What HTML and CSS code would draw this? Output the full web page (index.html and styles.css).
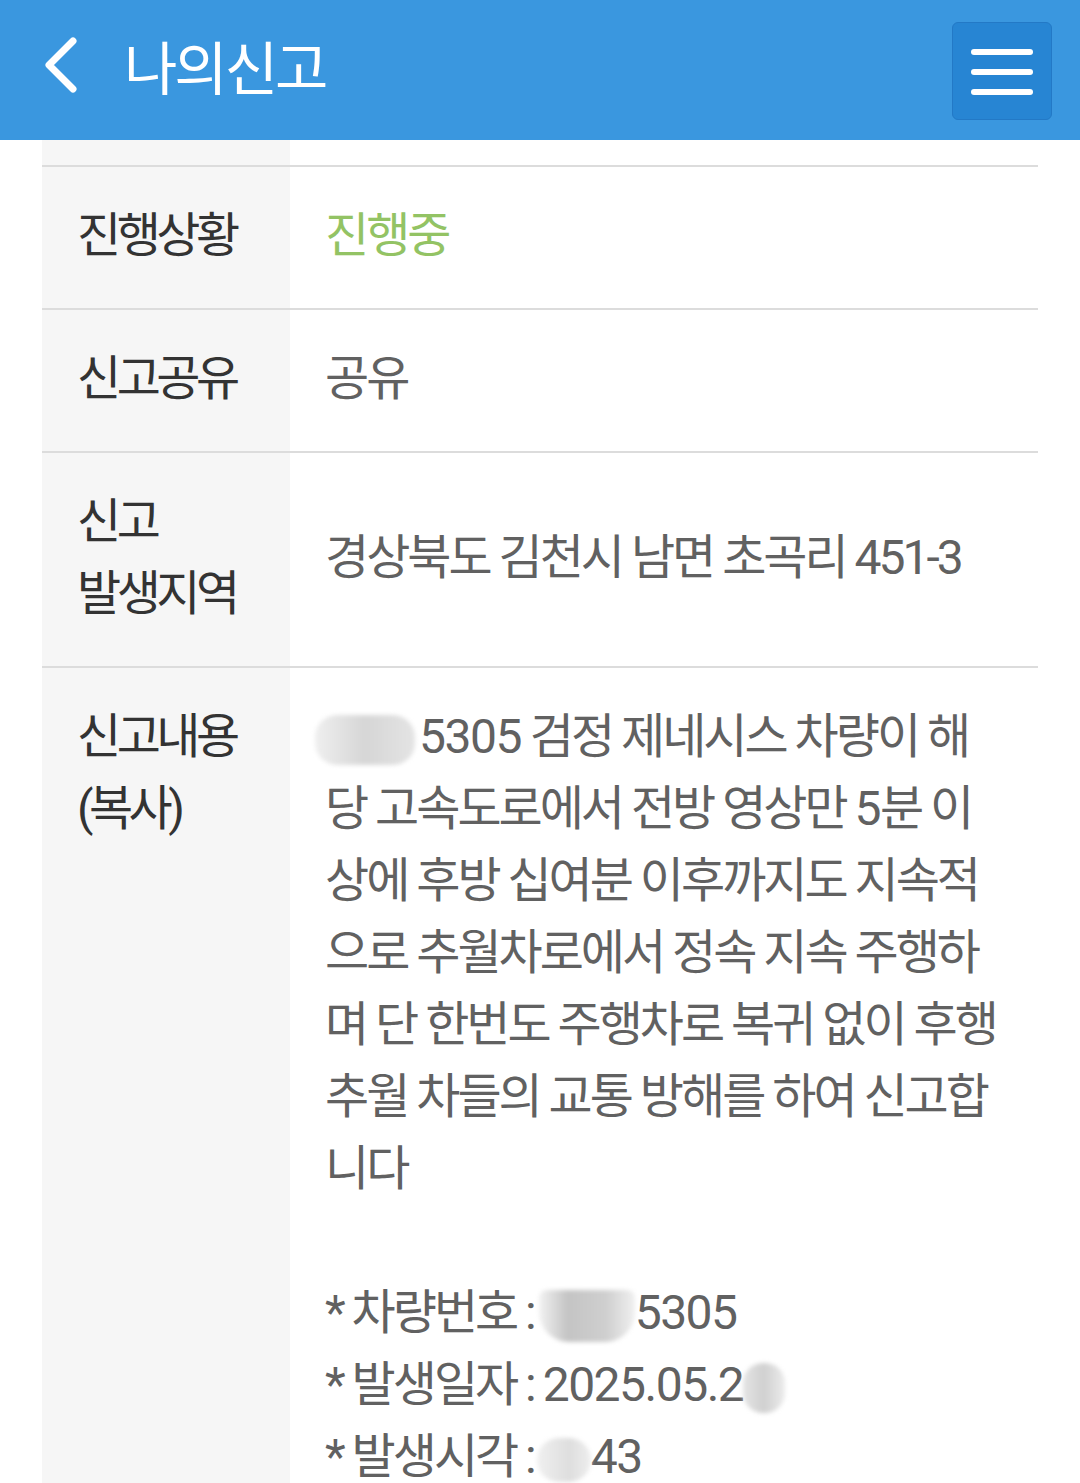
FILE: index.html
```html
<!DOCTYPE html>
<html lang="ko">
<head>
<meta charset="utf-8">
<title>나의신고</title>
<link rel="stylesheet" href="styles.css">
</head>
<body>
<header class="topbar">
  <div class="back">
    <svg width="40" height="60" viewBox="0 0 40 60"><path d="M33 6 L9 30 L33 54" fill="none" stroke="#fff" stroke-width="7" stroke-linecap="round" stroke-linejoin="round"/></svg>
  </div>
  <h1 class="title">나의신고</h1>
  <div class="menu-btn">
    <span class="bar"></span><span class="bar"></span><span class="bar"></span>
  </div>
</header>
<main class="table">
  <div class="row row-partial"><div class="label"></div><div class="value"></div></div>
  <div class="row">
    <div class="label">진행상황</div>
    <div class="value green">진행중</div>
  </div>
  <div class="row">
    <div class="label">신고공유</div>
    <div class="value">공유</div>
  </div>
  <div class="row">
    <div class="label">신고<br>발생지역</div>
    <div class="value center">경상북도 김천시 남면 초곡리 451-3</div>
  </div>
  <div class="row row-last">
    <div class="label">신고내용<br>(복사)</div>
    <div class="value"><span class="blur b1"></span><span class="num">5305</span> 검정 제네시스 차량이 해<br>당 고속도로에서 전방 영상만 <span class="num">5</span>분 이<br>상에 후방 십여분 이후까지도 지속적<br>으로 추월차로에서 정속 지속 주행하<br>며 단 한번도 주행차로 복귀 없이 후행<br>추월 차들의 교통 방해를 하여 신고합<br>니다<br><br>* 차량번호 : <span class="blur b2"></span><span class="num">5305</span><br>* 발생일자 : <span class="num">2025.05.2</span><span class="blur b3"></span><br>* 발생시각 : <span class="blur b4"></span><span class="num">43</span></div>
  </div>
</main>
</body>
</html>
```
FILE: styles.css
```css
html, body {
  margin: 0;
  padding: 0;
  background: #fff;
  font-family: "Roboto", "Noto Sans CJK KR", sans-serif;
}
.topbar {
  height: 140px;
  background: #3a97df;
  display: flex;
  align-items: center;
  padding: 0 28px 0 40px;
  box-sizing: border-box;
}
.back {
  width: 40px;
  height: 60px;
  margin-right: 44px;
  margin-top: -10px;
}
.back svg { display: block; }
.title {
  margin: 0;
  margin-top: -10px;
  flex: 1;
  color: #fff;
  font-weight: 400;
  font-size: 58px;
  letter-spacing: -3px;
}
.menu-btn {
  width: 100px;
  height: 98px;
  margin-top: 2px;
  background: #2785d3;
  border: 1px solid #2379c6;
  border-radius: 6px;
  display: flex;
  flex-direction: column;
  align-items: center;
  padding-top: 26px;
  gap: 14px;
  box-sizing: border-box;
}
.bar {
  width: 62px;
  height: 6px;
  border-radius: 3px;
  background: #fff;
}
.table {
  margin: 0 42px;
}
.row {
  display: flex;
  border-bottom: 2px solid #dcdcdc;
}
.row-partial { height: 25px; }
.row-last { border-bottom: none; min-height: 900px; }
.label {
  width: 248px;
  flex: none;
  background: #f6f6f6;
  box-sizing: border-box;
  padding: 33px 0 36px 35px;
  color: #333;
  font-size: 48px;
  line-height: 72px;
  letter-spacing: -4.5px;
}
.row-partial .label, .row-partial .value { padding: 0; }
.value {
  flex: 1;
  padding: 33px 0 36px 35px;
  color: #616161;
  font-size: 48px;
  line-height: 72px;
  letter-spacing: -3px;
  white-space: nowrap;
}
.num { letter-spacing: -1.5px; }
.value.center {
  display: flex;
  align-items: center;
}
.green { color: #93c364; }
.blur {
  display: inline-block;
  vertical-align: middle;
  background: linear-gradient(90deg, #efefef, #d6d6d6 50%, #e4e4e4);
  border-radius: 22px;
  filter: blur(2px);
}
.b1 { width: 100px; height: 50px; margin-left: -10px; margin-right: 4px; }
.b2 { width: 96px; height: 52px; margin-left: -4px; background: linear-gradient(90deg, #f2f2f2, #c4c4c4 30%, #cfcfcf 70%, #f0f0f0); border-radius: 8px 8px 30px 30px; }
.b3 { width: 42px; height: 50px; background: linear-gradient(90deg, #e4e4e4, #d0d0d0 50%, #ececec); border-radius: 20px; }
.b4 { width: 54px; height: 44px; margin-left: -6px; background: linear-gradient(90deg, #f0f0f0, #dedede 60%, #eeeeee); }
```
